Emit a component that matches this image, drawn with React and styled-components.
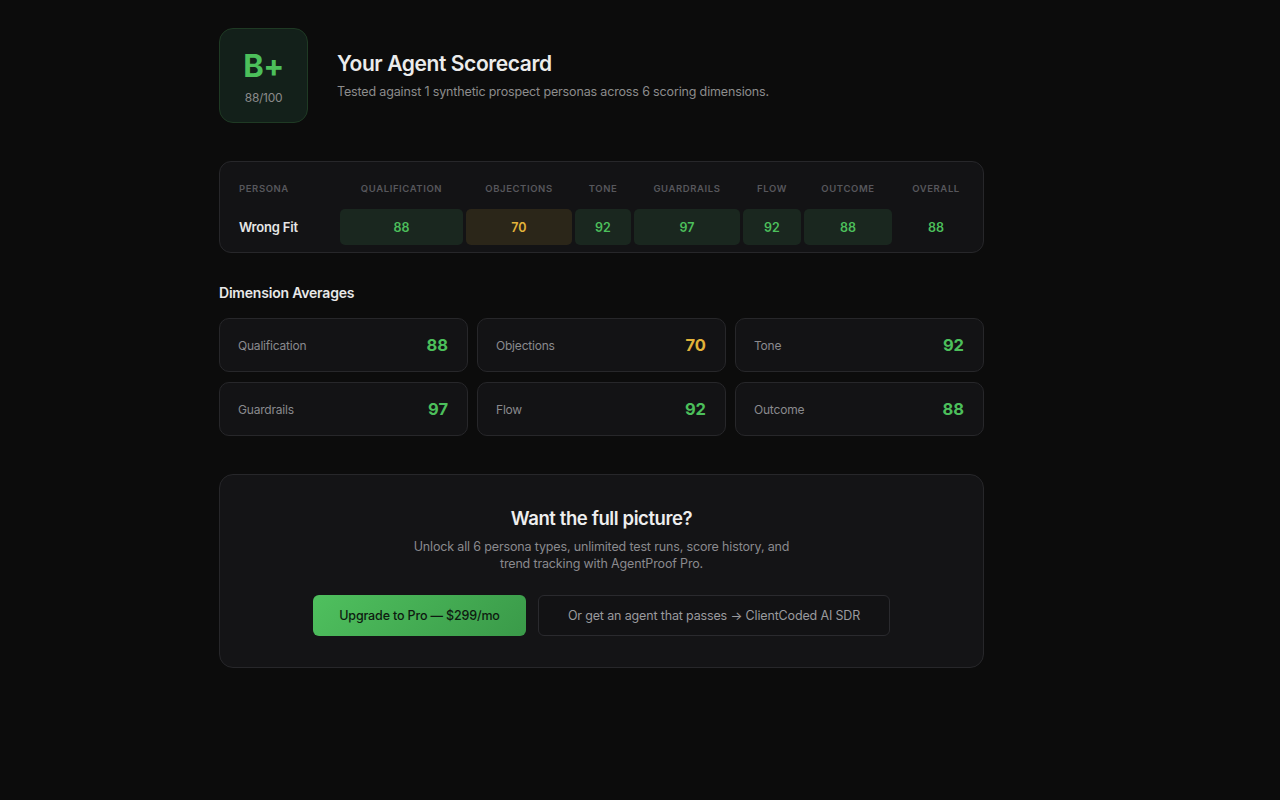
import React from "react";
import styled, { createGlobalStyle } from "styled-components";

const Global = createGlobalStyle`
  html, body { margin: 0; padding: 0; background: #0c0c0c; }
  body { font-family: Inter, "Noto Sans", "Liberation Sans", sans-serif; color: #e8e8e8; }
  * { box-sizing: border-box; }
`;

const GREEN = "#4cbf5b";
const AMBER = "#e2b33a";

const Page = styled.div`
  min-height: 800px;
  background: #0c0c0c;
  padding-top: 28px;
`;

const Container = styled.div`
  width: 765px;
  margin-left: 219px;
  display: flex;
  flex-direction: column;
`;

const Header = styled.header`
  display: flex;
  align-items: center;
  gap: 29px;
`;

const GradeBox = styled.div`
  width: 89px;
  height: 95px;
  border-radius: 14px;
  border: 1px solid #1f3a24;
  background: #13201a;
  display: flex;
  flex-direction: column;
  align-items: center;
  justify-content: center;
  gap: 6px;
  padding-top: 2px;
`;

const Grade = styled.div`
  font-size: 31px;
  font-weight: 700;
  color: ${GREEN};
  line-height: 36px;
  letter-spacing: -0.5px;
`;

const GradeScore = styled.div`
  font-size: 12px;
  color: #8a8a8a;
  line-height: 16px;
  letter-spacing: -0.3px;
`;

const TitleBlock = styled.div`
  display: flex;
  flex-direction: column;
  gap: 5px;
`;

const Title = styled.h1`
  margin: 0;
  font-size: 21px;
  font-weight: 600;
  color: #ececec;
  letter-spacing: -0.4px;
  line-height: 28px;
`;

const Subtitle = styled.p`
  margin: 0;
  font-size: 12.5px;
  color: #8c8c8c;
  line-height: 18px;
  letter-spacing: -0.15px;
`;

const TableCard = styled.section`
  margin-top: 38px;
  background: #131315;
  border: 1px solid #27272a;
  border-radius: 12px;
  padding: 16px 6px 7px 17px;
`;

const Grid = styled.div`
  display: grid;
  grid-template-columns: 100px 123px 106px 56px 106px 58px 88px 82px;
  column-gap: 3px;
  row-gap: 11px;
`;

const HeadCell = styled.div`
  height: 20px;
  display: flex;
  align-items: center;
  justify-content: ${(p) => (p.$left ? "flex-start" : "center")};
  padding-left: ${(p) => (p.$left ? "2px" : "0")};
  font-size: 9.5px;
  font-weight: 600;
  letter-spacing: 0.6px;
  color: #57575c;
  text-transform: uppercase;
  white-space: nowrap;
`;

const NameCell = styled.div`
  height: 36px;
  display: flex;
  align-items: center;
  padding-left: 2px;
  font-size: 13px;
  font-weight: 600;
  color: #e6e6e6;
  letter-spacing: -0.2px;
`;

const ScoreCell = styled.div`
  height: 36px;
  display: flex;
  align-items: center;
  justify-content: center;
  border-radius: 5px;
  font-size: 12.5px;
  font-weight: 600;
  background: ${(p) => (p.$plain ? "transparent" : p.$warn ? "#2b2619" : "#1a271f")};
  color: ${(p) => (p.$warn ? AMBER : GREEN)};
`;

const SectionTitle = styled.h2`
  margin: 30px 0 0;
  font-size: 14px;
  font-weight: 600;
  color: #e8e8e8;
  line-height: 20px;
  letter-spacing: -0.2px;
`;

const AvgGrid = styled.div`
  margin-top: 15px;
  display: grid;
  grid-template-columns: 249px 249px 249px;
  column-gap: 9px;
  row-gap: 10px;
`;

const AvgCard = styled.div`
  height: 54px;
  border: 1px solid #27272a;
  background: #131315;
  border-radius: 10px;
  display: flex;
  align-items: center;
  justify-content: space-between;
  padding: 0 19px 0 18px;
`;

const AvgLabel = styled.span`
  font-size: 12px;
  color: #8a8a8e;
  letter-spacing: -0.2px;
`;

const AvgValue = styled.span`
  font-size: 16.5px;
  font-weight: 700;
  color: ${(p) => (p.$warn ? AMBER : GREEN)};
`;

const Cta = styled.section`
  margin-top: 38px;
  height: 194px;
  border: 1px solid #27272a;
  background: #141416;
  border-radius: 14px;
  display: flex;
  flex-direction: column;
  align-items: center;
  padding-top: 30px;
`;

const CtaTitle = styled.h3`
  margin: 0;
  font-size: 18.5px;
  font-weight: 600;
  color: #eeeeee;
  line-height: 26px;
  letter-spacing: -0.4px;
`;

const CtaText = styled.p`
  margin: 7px 0 0;
  width: 400px;
  text-align: center;
  font-size: 12.5px;
  line-height: 17px;
  color: #8a8a8e;
  letter-spacing: -0.15px;
`;

const Buttons = styled.div`
  margin-top: 23px;
  display: flex;
  gap: 12px;
`;

const PrimaryButton = styled.button`
  width: 213px;
  height: 41px;
  border: none;
  border-radius: 6px;
  background: linear-gradient(135deg, #4fc05e 0%, #3a9a49 100%);
  color: #0e1a10;
  font-family: inherit;
  font-size: 12.5px;
  font-weight: 500;
  letter-spacing: -0.15px;
  cursor: pointer;
`;

const SecondaryButton = styled.button`
  width: 352px;
  height: 41px;
  border: 1px solid #2a2a2e;
  border-radius: 6px;
  background: #121214;
  color: #9a9a9e;
  font-family: inherit;
  font-size: 12.5px;
  letter-spacing: -0.15px;
  cursor: pointer;
`;

const heads = ["Persona", "Qualification", "Objections", "Tone", "Guardrails", "Flow", "Outcome", "Overall"];
const scores = [
  { v: 88 },
  { v: 70, warn: true },
  { v: 92 },
  { v: 97 },
  { v: 92 },
  { v: 88 },
];
const avgs = [
  ["Qualification", 88],
  ["Objections", 70, true],
  ["Tone", 92],
  ["Guardrails", 97],
  ["Flow", 92],
  ["Outcome", 88],
];

export default function App() {
  return (
    <>
      <Global />
      <Page>
        <Container>
          <Header>
            <GradeBox>
              <Grade>B+</Grade>
              <GradeScore>88/100</GradeScore>
            </GradeBox>
            <TitleBlock>
              <Title>Your Agent Scorecard</Title>
              <Subtitle>Tested against 1 synthetic prospect personas across 6 scoring dimensions.</Subtitle>
            </TitleBlock>
          </Header>

          <TableCard>
            <Grid>
              {heads.map((h, i) => (
                <HeadCell key={h} $left={i === 0}>{h}</HeadCell>
              ))}
              <NameCell>Wrong Fit</NameCell>
              {scores.map((s, i) => (
                <ScoreCell key={i} $warn={s.warn}>{s.v}</ScoreCell>
              ))}
              <ScoreCell $plain>88</ScoreCell>
            </Grid>
          </TableCard>

          <SectionTitle>Dimension Averages</SectionTitle>
          <AvgGrid>
            {avgs.map(([l, v, w]) => (
              <AvgCard key={l}>
                <AvgLabel>{l}</AvgLabel>
                <AvgValue $warn={w}>{v}</AvgValue>
              </AvgCard>
            ))}
          </AvgGrid>

          <Cta>
            <CtaTitle>Want the full picture?</CtaTitle>
            <CtaText>
              Unlock all 6 persona types, unlimited test runs, score history, and trend tracking with AgentProof Pro.
            </CtaText>
            <Buttons>
              <PrimaryButton>Upgrade to Pro — $299/mo</PrimaryButton>
              <SecondaryButton>Or get an agent that passes → ClientCoded AI SDR</SecondaryButton>
            </Buttons>
          </Cta>
        </Container>
      </Page>
    </>
  );
}
